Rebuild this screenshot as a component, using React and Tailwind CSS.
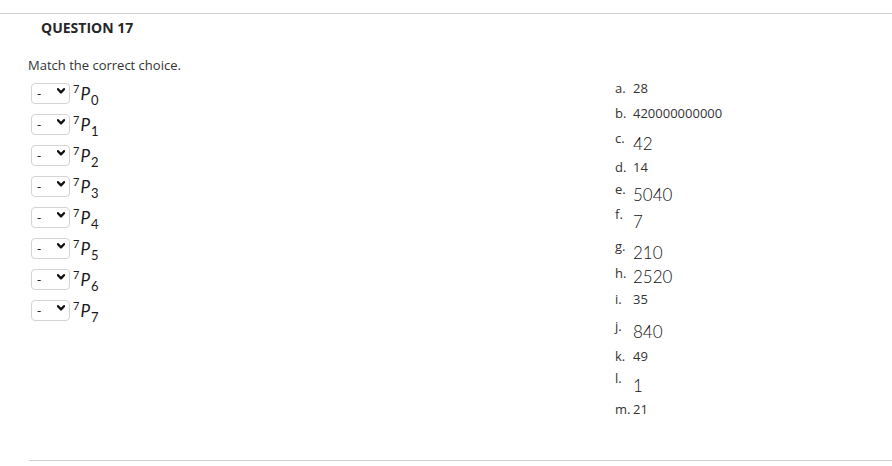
import React from 'react';

// left side: the eight permutations to match
const prompts = [0, 1, 2, 3, 4, 5, 6, 7];

// right side: answer list. big = rendered math image (larger font), h = row height, mt = value offset
const answers = [
  { key: 'a', value: '28', h: 'h-[25px]' },
  { key: 'b', value: '420000000000', h: 'h-[25px]' },
  { key: 'c', value: '42', h: 'h-[29px]', big: true, mt: 'mt-[5px]' },
  { key: 'd', value: '14', h: 'h-[22px]' },
  { key: 'e', value: '5040', h: 'h-[25px]', big: true, mt: 'mt-[5px]' },
  { key: 'f', value: '7', h: 'h-[32px]', big: true, mt: 'mt-[7px]' },
  { key: 'g', value: '210', h: 'h-[27px]', big: true, mt: 'mt-[6px]' },
  { key: 'h', value: '2520', h: 'h-[26px]', big: true, mt: 'mt-[3px]' },
  { key: 'i', value: '35', h: 'h-[27px]' },
  { key: 'j', value: '840', h: 'h-[30px]', big: true, mt: 'mt-[5px]' },
  { key: 'k', value: '49', h: 'h-[22px]' },
  { key: 'l', value: '1', h: 'h-[31px]', big: true, mt: 'mt-[7px]' },
  { key: 'm', value: '21', h: 'h-[16px]' },
];

const Dropdown = () => (
  <div className="relative w-[39px] h-[21px] shrink-0">
    <select
      defaultValue="-"
      className="appearance-none w-full h-full border border-[#d4d4d4] rounded-[4px] bg-white pl-[5px] pr-0 py-0 text-[13px] leading-[19px] text-[#222] font-['Open_Sans',sans-serif] outline-none"
    >
      <option>-</option>
    </select>
    <svg
      className="absolute left-[26px] top-[8px] w-[8px] h-[6px] pointer-events-none"
      viewBox="0 0 8 6"
      fill="none"
    >
      <polyline points="1,1.2 4,4.4 7,1.2" stroke="#111" strokeWidth="2.3" strokeLinecap="round" strokeLinejoin="round" />
    </svg>
  </div>
);

const Perm = ({ k }) => (
  <span className="flex items-start ml-[3px] font-['Lato',sans-serif] text-[#1a1a1a]">
    <span className="text-[11px] leading-[11px] mt-[3px]">7</span>
    <i className="text-[17px] leading-[17px] mt-[5px] ml-[1px]">P</i>
    <span className="text-[13px] leading-[13px] ml-[1px] mt-[14px]">{k}</span>
  </span>
);

const App = () => {
  return (
    <div className="w-[892px] h-[466px] bg-white pt-[13px] font-['Open_Sans',sans-serif] text-[#333] overflow-hidden">
      <section className="border-t border-[#d0d0d0]">
        <h2 className="pl-[41px] pt-[4px] text-[14px] leading-[20px] font-bold text-[#262626]">QUESTION 17</h2>

        <p className="pl-[28px] mt-[18px] text-[13px] leading-[18px]">Match the correct choice.</p>

        <div className="flex mt-[5px]">
          {/* prompts with dropdowns */}
          <div className="w-[615px] pl-[31px] pt-[1px] flex flex-col">
            {prompts.map((k) => (
              <div key={k} className="flex items-start h-[31px]">
                <Dropdown />
                <Perm k={k} />
              </div>
            ))}
          </div>

          {/* answer list */}
          <ol className="flex flex-col pt-[1px]">
            {answers.map((a) => (
              <li key={a.key} className={`flex items-start ${a.h}`}>
                <span className="w-[18px] text-[13px] leading-[16px]">{a.key}.</span>
                {a.big ? (
                  <span className={`font-['Lato',sans-serif] font-light text-[17px] leading-[18px] text-[#111] ${a.mt}`}>{a.value}</span>
                ) : (
                  <span className="text-[13px] leading-[16px]">{a.value}</span>
                )}
              </li>
            ))}
          </ol>
        </div>
      </section>

      <div className="ml-[29px] mt-[43px] border-t border-[#d0d0d0]" />
    </div>
  );
};

export default App;
